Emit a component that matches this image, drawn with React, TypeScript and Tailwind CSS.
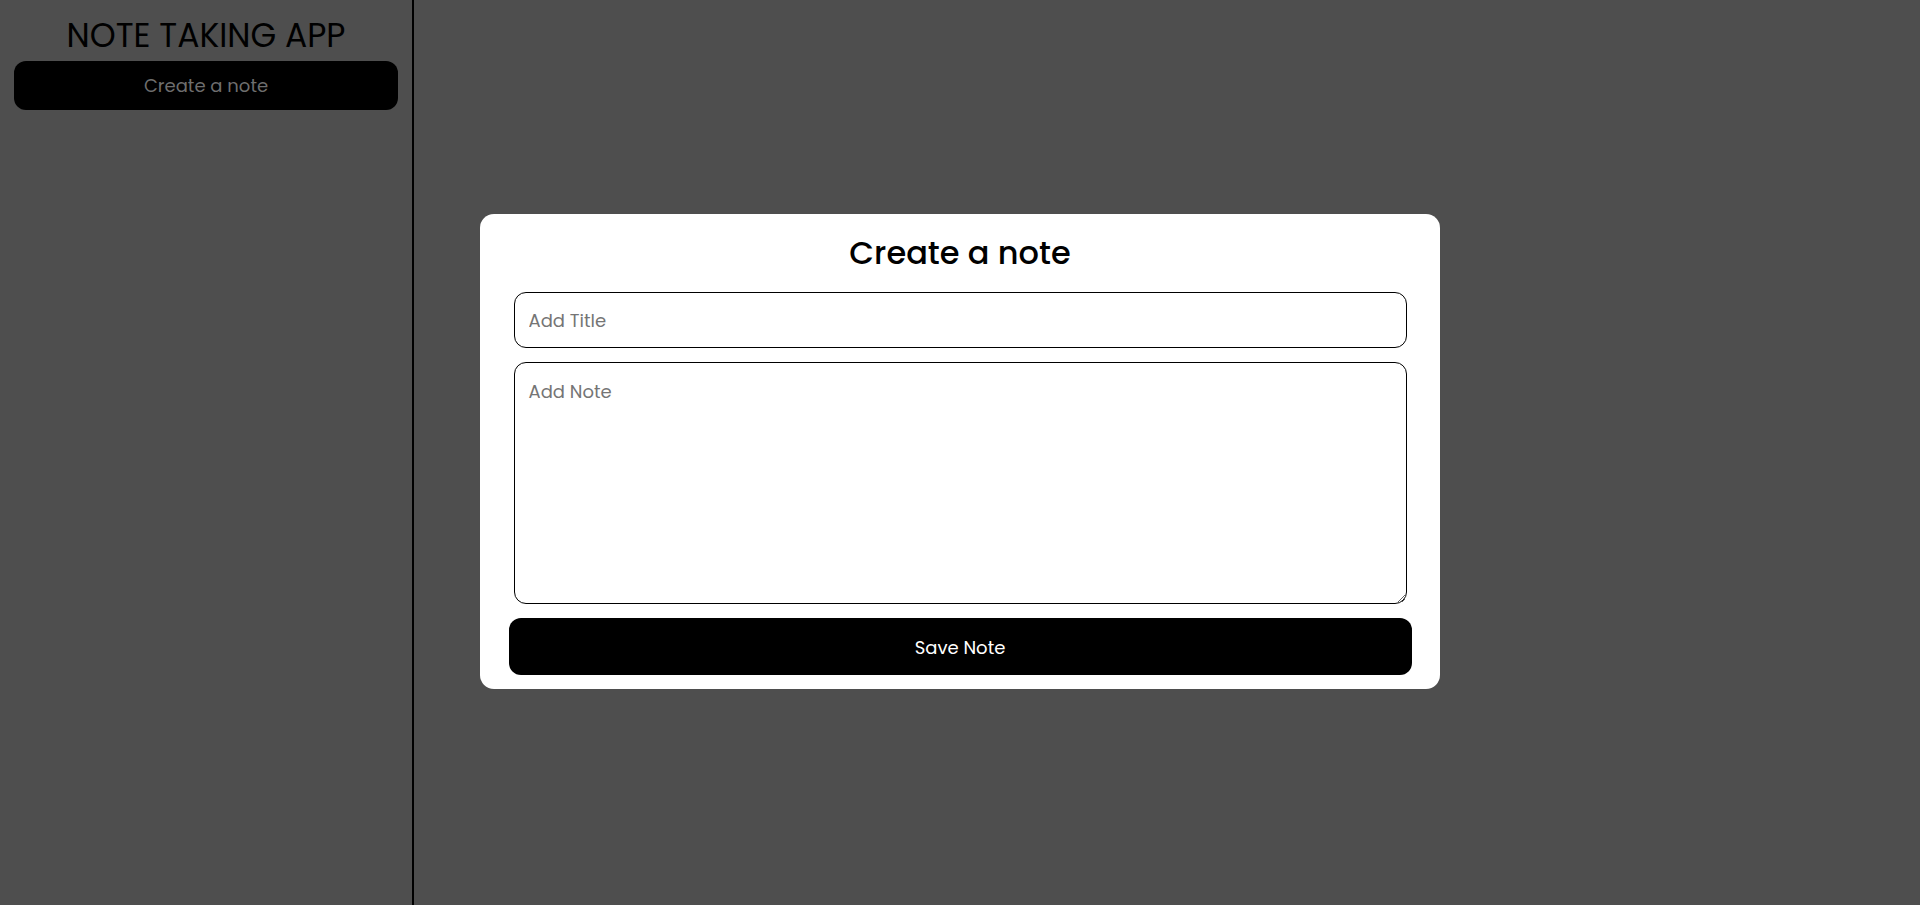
import React from "react";

export default function App() {
  const font = { fontFamily: "Poppins, 'Noto Sans', 'Open Sans', sans-serif" };
  return (
    <div className="flex h-screen w-full bg-[#4e4e4e] text-black" style={font}>
      <aside className="flex w-[414px] shrink-0 flex-col items-center border-r-2 border-black pt-[13px]">
        <h1 className="h-[46px] text-[33px] font-normal leading-[46px] text-black">
          NOTE TAKING APP
        </h1>
        <button className="mt-[2px] h-[49px] w-[384px] rounded-[12px] bg-black text-[18px] text-[#6e6e6e]">
          Create a note
        </button>
      </aside>
      <main className="flex-1" />
      <div className="fixed inset-0 flex items-start justify-center pt-[214px]">
        <div className="flex h-[475px] w-[960px] flex-col items-center rounded-[14px] bg-white pt-[15px]">
          <h2 className="h-[48px] text-[32px] font-medium leading-[48px] text-black">Create a note</h2>
          <input
            className="mt-[15px] h-[56px] w-[893px] rounded-[12px] border border-black px-[14px] text-[18px] outline-none placeholder:text-[#757575]"
            placeholder="Add Title"
          />
          <textarea
            className="mt-[14px] h-[242px] w-[893px] rounded-[12px] border border-black px-[14px] pb-[13px] pt-[15px] text-[18px] leading-[27px] outline-none placeholder:text-[#757575]"
            placeholder="Add Note"
          />
          <button className="mt-[14px] h-[57px] w-[903px] rounded-[12px] bg-black pt-[1px] text-[18px] font-normal text-white">
            Save Note
          </button>
        </div>
      </div>
    </div>
  );
}
